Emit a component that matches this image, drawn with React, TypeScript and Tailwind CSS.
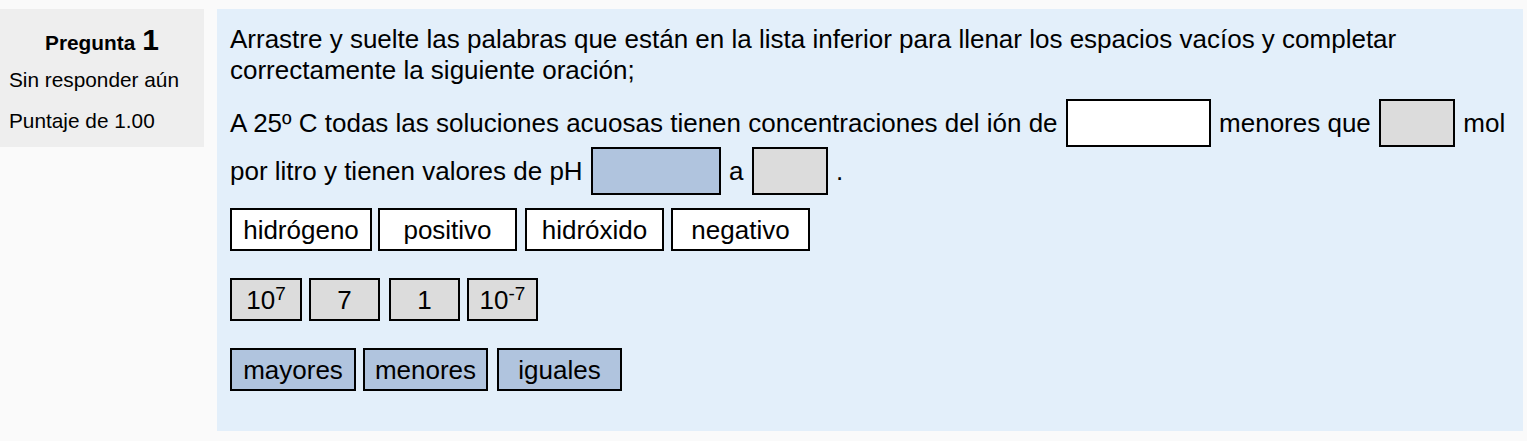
const font = { fontFamily: '"Liberation Sans", Arial, sans-serif' };

type Chip = { label: React.ReactNode; w: number; ml: number };

const words: Chip[] = [
  { label: "hidrógeno", w: 142, ml: 0 },
  { label: "positivo", w: 139, ml: 6 },
  { label: "hidróxido", w: 139, ml: 8 },
  { label: "negativo", w: 139, ml: 7 },
];

const numbers: Chip[] = [
  { label: <>10<sup className="relative -top-[9px] text-[19px]">7</sup></>, w: 72, ml: 0 },
  { label: "7", w: 71, ml: 7 },
  { label: "1", w: 71, ml: 9 },
  { label: <>10<sup className="relative -top-[9px] text-[19px]">-7</sup></>, w: 71, ml: 7 },
];

const relations: Chip[] = [
  { label: "mayores", w: 126, ml: 0 },
  { label: "menores", w: 125, ml: 7 },
  { label: "iguales", w: 125, ml: 9 },
];

function ChipRow({ items, bg }: { items: Chip[]; bg: string }) {
  return (
    <div className="flex h-[43px]">
      {items.map((it, i) => (
        <div
          key={i}
          className={`flex h-[43px] items-center justify-center border-2 border-black ${bg}`}
          style={{ width: it.w, marginLeft: it.ml }}
        >
          <span className="leading-none">{it.label}</span>
        </div>
      ))}
    </div>
  );
}

function Drop({ w, bg }: { w: number; bg: string }) {
  return (
    <span
      className={`mx-[1px] inline-block h-[48px] border-2 border-black align-top ${bg}`}
      style={{ width: w }}
    />
  );
}

export default function App() {
  return (
    <div className="flex h-[441px] w-[1527px] items-start bg-[#fafafa] pt-[9px] text-black" style={font}>
      {/* Question info */}
      <div className="h-[138px] w-[204px] shrink-0 bg-[#eeeeee] pl-[9px] pt-[16px]">
        <div className="flex items-baseline justify-center pr-[9px] font-bold">
          <span className="text-[20.8px]">Pregunta</span>
          <span className="ml-[7px] text-[30px] leading-none">1</span>
        </div>
        <div className="mt-[7px] text-[20.8px] leading-[30px]">Sin responder aún</div>
        <div className="mt-[11px] text-[20.8px] leading-[30px]">Puntaje de 1.00</div>
      </div>

      {/* Question body */}
      <div className="ml-[13px] h-[422px] w-[1306px] bg-[#e3effa] pl-[13px] pt-[15px] text-[26px]">
        <p className="leading-[31px]">
          Arrastre y suelte las palabras que están en la lista inferior para llenar los espacios vacíos y completar
          correctamente la siguiente oración;
        </p>
        <p className="mt-[13px] leading-[48px]">
          A 25º C todas las soluciones acuosas tienen concentraciones del ión de{" "}
          <Drop w={145} bg="bg-white" /> menores que <Drop w={76} bg="bg-[#dcdcdc]" /> mol por litro y tienen valores
          de pH <Drop w={130} bg="bg-[#b0c4de]" /> a <Drop w={76} bg="bg-[#dcdcdc]" /> .
        </p>
        <div className="mt-[13px] flex flex-col gap-[27px]">
          <ChipRow items={words} bg="bg-white" />
          <ChipRow items={numbers} bg="bg-[#dcdcdc]" />
          <ChipRow items={relations} bg="bg-[#b0c4de]" />
        </div>
      </div>
    </div>
  );
}
